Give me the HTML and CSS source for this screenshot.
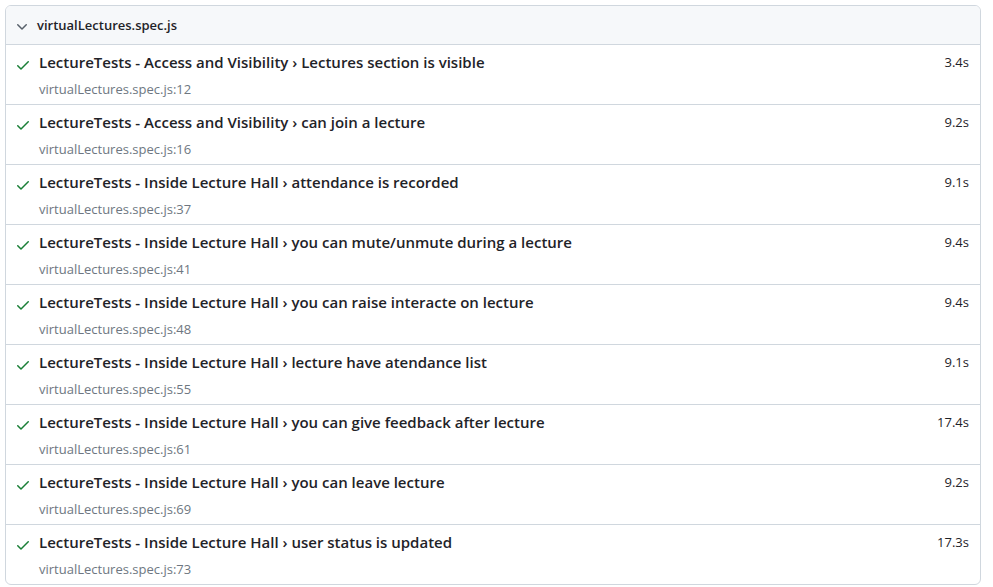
FILE: index.html
```html
<!DOCTYPE html>
<html>
<head>
<meta charset="utf-8">
<link rel="stylesheet" href="styles.css">
</head>
<body>
<div class="chip">
  <div class="chip-header">
    <svg class="chevron" viewBox="0 0 16 16" width="16" height="16"><path d="M12.78 5.22a.749.749 0 0 1 0 1.06l-4.25 4.25a.749.749 0 0 1-1.06 0L3.22 6.28a.749.749 0 1 1 1.06-1.06L8 8.939l3.72-3.719a.749.749 0 0 1 1.06 0Z"/></svg>
    <span class="file-name">virtualLectures.spec.js</span>
  </div>
  <div class="tests">
    <div class="test">
      <svg class="check" viewBox="0 0 16 16" width="16" height="16"><path d="M13.78 4.22a.75.75 0 0 1 0 1.06l-7.25 7.25a.75.75 0 0 1-1.06 0L2.22 9.28a.751.751 0 0 1 .018-1.042.751.751 0 0 1 1.042-.018L6 10.94l6.72-6.72a.75.75 0 0 1 1.06 0Z"/></svg>
      <div class="title">LectureTests - Access and Visibility › Lectures section is visible</div>
      <div class="duration">3.4s</div>
      <div class="location">virtualLectures.spec.js:12</div>
    </div>
    <div class="test">
      <svg class="check" viewBox="0 0 16 16" width="16" height="16"><path d="M13.78 4.22a.75.75 0 0 1 0 1.06l-7.25 7.25a.75.75 0 0 1-1.06 0L2.22 9.28a.751.751 0 0 1 .018-1.042.751.751 0 0 1 1.042-.018L6 10.94l6.72-6.72a.75.75 0 0 1 1.06 0Z"/></svg>
      <div class="title">LectureTests - Access and Visibility › can join a lecture</div>
      <div class="duration">9.2s</div>
      <div class="location">virtualLectures.spec.js:16</div>
    </div>
    <div class="test">
      <svg class="check" viewBox="0 0 16 16" width="16" height="16"><path d="M13.78 4.22a.75.75 0 0 1 0 1.06l-7.25 7.25a.75.75 0 0 1-1.06 0L2.22 9.28a.751.751 0 0 1 .018-1.042.751.751 0 0 1 1.042-.018L6 10.94l6.72-6.72a.75.75 0 0 1 1.06 0Z"/></svg>
      <div class="title">LectureTests - Inside Lecture Hall › attendance is recorded</div>
      <div class="duration">9.1s</div>
      <div class="location">virtualLectures.spec.js:37</div>
    </div>
    <div class="test">
      <svg class="check" viewBox="0 0 16 16" width="16" height="16"><path d="M13.78 4.22a.75.75 0 0 1 0 1.06l-7.25 7.25a.75.75 0 0 1-1.06 0L2.22 9.28a.751.751 0 0 1 .018-1.042.751.751 0 0 1 1.042-.018L6 10.94l6.72-6.72a.75.75 0 0 1 1.06 0Z"/></svg>
      <div class="title">LectureTests - Inside Lecture Hall › you can mute/unmute during a lecture</div>
      <div class="duration">9.4s</div>
      <div class="location">virtualLectures.spec.js:41</div>
    </div>
    <div class="test">
      <svg class="check" viewBox="0 0 16 16" width="16" height="16"><path d="M13.78 4.22a.75.75 0 0 1 0 1.06l-7.25 7.25a.75.75 0 0 1-1.06 0L2.22 9.28a.751.751 0 0 1 .018-1.042.751.751 0 0 1 1.042-.018L6 10.94l6.72-6.72a.75.75 0 0 1 1.06 0Z"/></svg>
      <div class="title">LectureTests - Inside Lecture Hall › you can raise interacte on lecture</div>
      <div class="duration">9.4s</div>
      <div class="location">virtualLectures.spec.js:48</div>
    </div>
    <div class="test">
      <svg class="check" viewBox="0 0 16 16" width="16" height="16"><path d="M13.78 4.22a.75.75 0 0 1 0 1.06l-7.25 7.25a.75.75 0 0 1-1.06 0L2.22 9.28a.751.751 0 0 1 .018-1.042.751.751 0 0 1 1.042-.018L6 10.94l6.72-6.72a.75.75 0 0 1 1.06 0Z"/></svg>
      <div class="title">LectureTests - Inside Lecture Hall › lecture have atendance list</div>
      <div class="duration">9.1s</div>
      <div class="location">virtualLectures.spec.js:55</div>
    </div>
    <div class="test">
      <svg class="check" viewBox="0 0 16 16" width="16" height="16"><path d="M13.78 4.22a.75.75 0 0 1 0 1.06l-7.25 7.25a.75.75 0 0 1-1.06 0L2.22 9.28a.751.751 0 0 1 .018-1.042.751.751 0 0 1 1.042-.018L6 10.94l6.72-6.72a.75.75 0 0 1 1.06 0Z"/></svg>
      <div class="title">LectureTests - Inside Lecture Hall › you can give feedback after lecture</div>
      <div class="duration">17.4s</div>
      <div class="location">virtualLectures.spec.js:61</div>
    </div>
    <div class="test">
      <svg class="check" viewBox="0 0 16 16" width="16" height="16"><path d="M13.78 4.22a.75.75 0 0 1 0 1.06l-7.25 7.25a.75.75 0 0 1-1.06 0L2.22 9.28a.751.751 0 0 1 .018-1.042.751.751 0 0 1 1.042-.018L6 10.94l6.72-6.72a.75.75 0 0 1 1.06 0Z"/></svg>
      <div class="title">LectureTests - Inside Lecture Hall › you can leave lecture</div>
      <div class="duration">9.2s</div>
      <div class="location">virtualLectures.spec.js:69</div>
    </div>
    <div class="test">
      <svg class="check" viewBox="0 0 16 16" width="16" height="16"><path d="M13.78 4.22a.75.75 0 0 1 0 1.06l-7.25 7.25a.75.75 0 0 1-1.06 0L2.22 9.28a.751.751 0 0 1 .018-1.042.751.751 0 0 1 1.042-.018L6 10.94l6.72-6.72a.75.75 0 0 1 1.06 0Z"/></svg>
      <div class="title">LectureTests - Inside Lecture Hall › user status is updated</div>
      <div class="duration">17.3s</div>
      <div class="location">virtualLectures.spec.js:73</div>
    </div>
  </div>
</div>
</body>
</html>
```
FILE: styles.css
```css
* { box-sizing: border-box; }
body {
  margin: 5px;
  font-family: "Open Sans", "Noto Sans", sans-serif;
  color: #1f2328;
  background: #ffffff;
}
.chip {
  width: 976px;
  border: 1px solid #d0d7de;
  border-radius: 6px;
  overflow: hidden;
}
.chip-header {
  height: 39px;
  display: flex;
  align-items: center;
  padding-left: 8px;
  background: #f6f8fa;
  border-bottom: 1px solid #d0d7de;
  font-size: 13px;
  font-weight: 600;
}
.chevron {
  fill: #57606a;
  flex: none;
  margin-top: 3px;
}
.file-name {
  margin-left: 7px;
}
.test {
  display: grid;
  grid-template-columns: 16px 1fr auto;
  column-gap: 8px;
  height: 60px;
  padding: 5px 11px 0 9px;
  border-bottom: 1px solid #d0d7de;
}
.test:last-child {
  border-bottom: none;
  height: 59px;
}
.check {
  fill: #1a7f37;
  align-self: center;
  grid-row: 1;
}
.title {
  font-size: 15px;
  font-weight: 600;
  line-height: 24px;
}
.duration {
  font-size: 13px;
  line-height: 24px;
}
.location {
  grid-column: 2;
  font-size: 13px;
  line-height: 20px;
  margin-top: -1px;
  color: #6e7781;
}
```
